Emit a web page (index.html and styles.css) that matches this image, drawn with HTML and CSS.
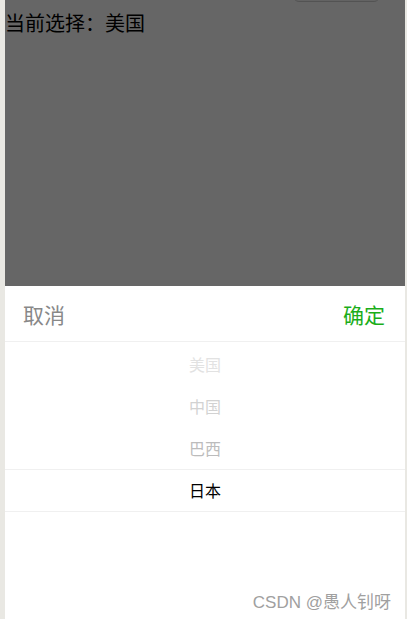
FILE: index.html
```html
<!DOCTYPE html>
<html lang="zh-CN">
<head>
  <meta charset="UTF-8" />
  <meta name="viewport" content="width=device-width, initial-scale=1" />
  <title>选择国家</title>
  <link rel="stylesheet" href="styles.css">
</head>
<body>

  <div class="page">
    <div class="top-bar">
      <div class="pick-button"></div>
    </div>

    <div class="current">当前选择：美国</div>

    <div class="mask"></div>

    <div class="sheet">
      <div class="sheet-header">
        <span class="cancel">取消</span>
        <span class="confirm">确定</span>
      </div>
      <div class="picker">
        <div class="picker-item fade-3">美国</div>
        <div class="picker-item fade-2">中国</div>
        <div class="picker-item fade-1">巴西</div>
        <div class="picker-item selected">日本</div>
      </div>
      <div class="watermark">CSDN @愚人钊呀</div>
    </div>
  </div>

</body>
</html>
```

FILE: styles.css
```css
body {
  margin: 0;
  background: #e9e8e3;
  font-family: "Noto Sans CJK SC", "Noto Sans", sans-serif;
  height: 619px;
  overflow: hidden;
}

.page {
  position: relative;
  margin-left: 5px;
  width: 400px;
  height: 619px;
  background: #fff;
  color: #000;
  overflow: hidden;
}

.top-bar {
  display: flex;
  justify-content: flex-end;
  padding-right: 25px;
}

.pick-button {
  width: 85px;
  height: 30px;
  margin-top: -30px;
  background: #f8f8f8;
  border: 1px solid #d0d0d0;
  border-radius: 6px;
}

.current {
  margin-top: 7px;
  font-size: 20px;
  line-height: 28px;
}

.mask {
  position: absolute;
  inset: 0;
  background: rgba(0, 0, 0, 0.6);
}

.sheet {
  position: absolute;
  left: 0;
  right: 0;
  bottom: 0;
  height: 333px;
  background: #fff;
}

.sheet-header {
  display: flex;
  justify-content: space-between;
  align-items: center;
  height: 55px;
  padding: 0 20px 0 18px;
  border-bottom: 1px solid #f0f0f0;
  font-size: 21px;
}

.cancel {
  color: #888;
}

.confirm {
  color: #1aad19;
}

.picker {
  padding-top: 1px;
}

.picker-item {
  height: 42px;
  line-height: 42px;
  text-align: center;
  font-size: 16px;
}

.fade-3 {
  color: #e2e2e2;
}

.fade-2 {
  color: #d2d2d2;
}

.fade-1 {
  color: #bcbcbc;
}

.selected {
  color: #000;
  border-top: 1px solid #f0f0f0;
  border-bottom: 1px solid #f0f0f0;
  height: 41px;
  line-height: 41px;
}

.watermark {
  position: absolute;
  right: 14px;
  bottom: 6px;
  font-family: "Liberation Sans", "Noto Sans CJK SC", sans-serif;
  font-size: 17px;
  color: #a0a0a0;
}
```
